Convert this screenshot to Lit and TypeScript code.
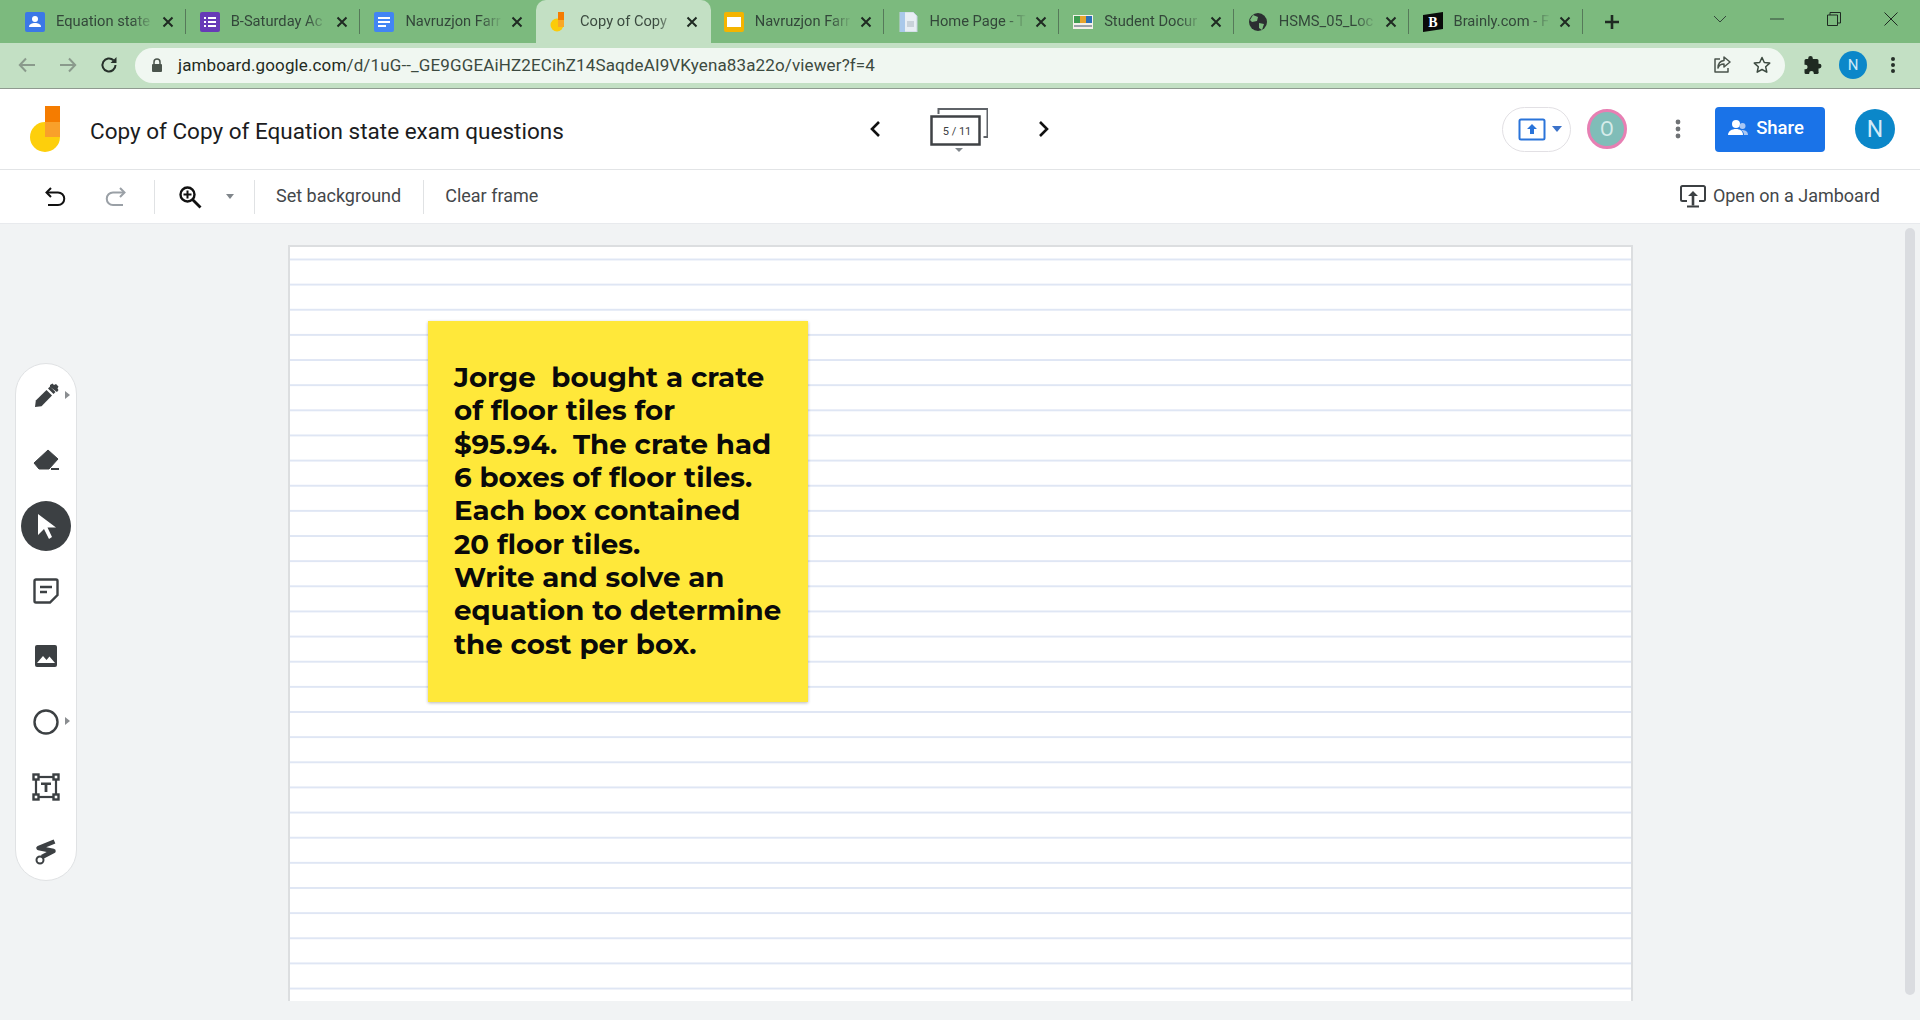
import { LitElement, html, css, svg } from "lit";
import { customElement } from "lit/decorators.js";

const favs: Record<string, unknown> = {
  classroom: svg`<rect x="1" y="0" width="20" height="20" rx="2" fill="#3b78e7"/><circle cx="11" cy="7" r="3" fill="#fff"/><path d="M5 15c0-3 3-4 6-4s6 1 6 4z" fill="#fff"/>`,
  forms: svg`<rect x="1" y="0" width="20" height="20" rx="2" fill="#673ab7"/><g fill="#fff"><rect x="5" y="5" width="2" height="2"/><rect x="9" y="5" width="8" height="2"/><rect x="5" y="9" width="2" height="2"/><rect x="9" y="9" width="8" height="2"/><rect x="5" y="13" width="2" height="2"/><rect x="9" y="13" width="8" height="2"/></g>`,
  docs: svg`<rect x="1" y="0" width="20" height="20" rx="2" fill="#4285f4"/><g fill="#fff"><rect x="5" y="5" width="12" height="2"/><rect x="5" y="9" width="12" height="2"/><rect x="5" y="13" width="8" height="2"/></g>`,
  jam: svg`<circle cx="9" cy="13" r="6.5" fill="#fbcb0a"/><rect x="10" y="0" width="6" height="8" fill="#f57c00"/><rect x="10" y="8" width="6" height="7" fill="#f9a825"/>`,
  slides: svg`<rect x="1" y="0" width="20" height="20" rx="2" fill="#f4b400"/><rect x="4" y="5" width="14" height="10" fill="#fff"/>`,
  page: svg`<path d="M3 0h13l4 4v16H3z" fill="#e8eef4" stroke="#c5d3e0"/><rect x="3" y="0" width="5" height="20" fill="#a9c8ea"/><rect x="10" y="9" width="7" height="6" fill="#c9d2da"/>`,
  nyc: svg`<rect x="1" y="3" width="20" height="14" fill="#f3f1ea"/><rect x="2" y="4" width="6" height="7" fill="#3f9c50"/><rect x="8" y="4" width="6" height="7" fill="#e6a52c"/><rect x="14" y="4" width="6" height="7" fill="#2c6fb7"/><rect x="2" y="13" width="18" height="2" fill="#9aa3a8"/>`,
  globe: svg`<circle cx="11" cy="10" r="9" fill="#2b2f31"/><path d="M6 3l5 2-1 4-5 1-2-2zM12 11l5 1-2 6-3-2z" fill="#7cba7e"/>`,
  brainly: svg`<path d="M1 3l20-3v17L1 20z" fill="#0a0a0a"/><text x="11" y="15" text-anchor="middle" font-family="Liberation Serif" font-weight="700" font-size="14" fill="#fff">B</text>`,
};

const tabs = [
  ["classroom", "Equation state"],
  ["forms", "B-Saturday Ac"],
  ["docs", "Navruzjon Farr"],
  ["jam", "Copy of Copy"],
  ["slides", "Navruzjon Farr"],
  ["page", "Home Page - T"],
  ["nyc", "Student Docur"],
  ["globe", "HSMS_05_Loc"],
  ["brainly", "Brainly.com - F"],
];

@customElement("app-root")
export class AppRoot extends LitElement {
  static styles = css`
    :host { display: block; width: 1920px; height: 1020px; overflow: hidden; font-family: Roboto, "Liberation Sans", sans-serif; background: #f1f3f4; }
    svg { display: block; flex: none; }
    .tabstrip { height: 43px; background: #7cba7e; display: flex; padding-left: 12px; box-sizing: border-box; align-items: stretch; }
    .tab { width: 174.700px; box-sizing: border-box; display: flex; align-items: center; padding: 0 11px 0 12px; border-right: 1px solid transparent; position: relative; font-size: 14.700px; color: #33473a; }
    .tab .sep { width: 1px; height: 25px; background: #56795a; margin-left: 11px; margin-right: -11px; }
    .tab.active { background: #c3e0c4; border-radius: 10px 10px 0 0; color: #3b4a3f; }
    .tab.noline .sep { background: transparent; }
    .tab .title { flex: 1; margin-left: 10px; padding-bottom: 1px; white-space: nowrap; -webkit-mask-image: linear-gradient(90deg, #000 76%, rgba(0,0,0,.1) 96%); mask-image: linear-gradient(90deg, #000 76%, rgba(0,0,0,.1) 96%); }
    .tab .x { margin-left: 6px; }
    .plus { margin-left: 19px; align-self: center; }
    .winctl { margin-left: auto; display: flex; align-items: center; align-self: flex-start; height: 38px; padding-right: 22px; gap: 43px; }
    .addr { background: #c3e0c4; display: flex; align-items: center; padding-left: 18px; box-sizing: border-box; border-bottom: 1px solid #8f9a90; height: 46px; padding-bottom: 1px; }
    .addr .nav { display: flex; gap: 23px; align-items: center; }
    .omni { margin-left: 17px; width: 1650px; height: 35px; background: #f0f7f1; border-radius: 18px; display: flex; align-items: center; box-sizing: border-box; padding: 0 14px 0 16px; font-size: 17px; color: #3c4a40; }
    .omni .url { margin-left: 15px; flex: 1; white-space: nowrap; letter-spacing: .13px; font-variant-ligatures: none; font-feature-settings: "liga" 0, "calt" 0; }
    .omni .url b { font-weight: 400; color: #1f2a22; }
    .omni .acts { display: flex; gap: 22px; align-items: center; }
    .addr .ext { margin-left: 18px; display: flex; align-items: center; gap: 16px; }
    .av-s { width: 28px; height: 28px; border-radius: 50%; background: #0b87c9; color: #cfe9f7; font-size: 15px; display: flex; align-items: center; justify-content: center; }
    .menu-dots { margin-left: 7px; }

    .head { height: 81px; background: #fff; border-bottom: 1px solid #e2e4e6; box-sizing: border-box; display: flex; align-items: center; padding-left: 30px; }
    .doc-title { margin-left: 30px; width: 779px; padding-top: 3px; font-size: 22.500px; color: #1b1c1e; white-space: nowrap; }
    .head .pager { display: flex; align-items: center; }
    .frames { margin: 0 50px 0 49px; position: relative; width: 58px; height: 46px; }
    .frames .count { position: absolute; left: 2px; top: 12px; width: 50px; height: 27px; text-align: center; font-size: 11px; line-height: 28px; color: #3c4043; }
    .head-right { margin-left: auto; display: flex; align-items: center; padding-right: 25px; }
    .pill { width: 69px; height: 45px; border: 1px solid #e2e0e4; border-radius: 23px; box-sizing: border-box; display: flex; align-items: center; padding-left: 15px; gap: 6px; }
    .o-av { margin-left: 16px; width: 40px; height: 40px; border-radius: 50%; background: #80bdb8; border: 3px solid #e77fb3; box-sizing: border-box; color: #d6ecea; font-size: 20px; display: flex; align-items: center; justify-content: center; }
    .dots { margin-left: 48px; margin-right: 34px; }
    .share { width: 110px; height: 45px; background: #1a73e8; border-radius: 4px; color: #fff; font-size: 18.500px; font-weight: 500; display: flex; align-items: center; justify-content: center; gap: 8px; padding: 0 9px 3px 0; box-sizing: border-box; }
    .n-av { margin-left: 30px; width: 40px; height: 40px; border-radius: 50%; background: #0b87c9; color: #d3ebf8; font-size: 23px; display: flex; align-items: center; justify-content: center; }

    .bar { height: 54px; background: #fff; border-bottom: 1px solid #e8eaed; box-sizing: border-box; display: flex; align-items: center; color: #44474a; font-size: 18px; padding-left: 44px; }
    .bar .s { width: 1px; height: 34px; background: #e0e2e4; }
    .bar .lbl { padding-bottom: 3px; }
    .bar .right { margin-left: auto; display: flex; align-items: center; gap: 7px; padding-right: 40px; }
    .m-redo { margin-left: 35px; }
    .m-sep1 { margin-left: 27px; }
    .m-zoom { margin-left: 23px; }
    .m-caret { margin-left: 24px; }
    .m-sep2 { margin-left: 20px; }
    .m-lbl { margin-left: 21px; }
    .m-sep3 { margin-left: 22px; }

    .stage { position: relative; height: 796px; padding: 21px 0 0 288px; box-sizing: border-box; }
    .frame { width: 1345px; height: 756px; box-sizing: border-box; border: 2px solid #dcdee0; border-bottom: 0; position: relative;
      background-color: #fff;
      background-image: linear-gradient(#dfe6f4 0 2px, transparent 2px);
      background-size: 100% 25.150px; background-position: 0 11.500px; }
    .sticky { position: absolute; left: 138px; top: 74px; width: 380px; height: 381px; background: #ffe83a; box-shadow: 0 1px 3px rgba(0,0,0,.28); box-sizing: border-box; padding: 40px 10px 0 26px; font-family: Montserrat, Inter, sans-serif; font-weight: 700; font-size: 27.700px; line-height: 33.350px; color: #0a0a0a; white-space: pre; }
    .palette { position: absolute; left: 15px; top: 139px; width: 62px; height: 518px; background: #fff; border-radius: 31px; box-sizing: border-box; border: 1px solid #e0e2e4; display: flex; flex-direction: column; align-items: center; }
    .tool { width: 50px; height: 65.300px; display: flex; align-items: center; justify-content: center; position: relative; flex: none; }
    .tool:first-child { margin-top: -1.500px; }
    .tool .more { position: absolute; left: 44px; top: 28px; width: 0; height: 0; border-left: 5px solid #8a8d90; border-top: 4px solid transparent; border-bottom: 4px solid transparent; }
    .tool.on::before { content: ""; position: absolute; width: 50px; height: 50px; border-radius: 50%; background: #3c4043; }
    .tool svg { position: relative; }
    .scroll { position: absolute; right: 5px; top: 4px; width: 10px; height: 767px; border-radius: 5px; background: #dadce0; }
  `;

  fav(k: string) {
    return html`<svg width="22" height="20" viewBox="0 0 22 20">${favs[k]}</svg>`;
  }

  render() {
    const d = "#3c4043";
    const x = html`<svg class="x" width="12" height="12" viewBox="0 0 12 12"><path d="M1.500 1.500l9 9m0-9l-9 9" stroke="#1f2a22" stroke-width="2"/></svg>`;
    return html`
      <div class="tabstrip">
        ${tabs.map(([k, t], i) => html`<div class="tab ${i === 3 ? "active" : ""} ${i === 2 || i === 3 ? "noline" : ""}">
          ${this.fav(k)}<span class="title">${t}</span>${x}<span class="sep"></span>
        </div>`)}
        <svg class="plus" width="18" height="18" viewBox="0 0 18 18"><path d="M9 2v14M2 9h14" stroke="#1f2a22" stroke-width="2.600"/></svg>
        <div class="winctl">
          <svg width="14" height="8" viewBox="0 0 14 8"><path d="M1 1l6 6 6-6" fill="none" stroke="#33473a" stroke-width="1"/></svg>
          <svg width="14" height="2" viewBox="0 0 14 2"><path d="M0 1h14" stroke="#33473a" stroke-width="1"/></svg>
          <svg width="14" height="14" viewBox="0 0 14 14"><path d="M.5 3h10v10.500H.5zM3 3V.5h10.500V11H10.500" fill="none" stroke="#1f2a22" stroke-width="1"/></svg>
          <svg width="14" height="14" viewBox="0 0 14 14"><path d="M.5.500l13 13m0-13l-13 13" stroke="#1f2a22" stroke-width="1"/></svg>
        </div>
      </div>
      <div class="addr">
        <div class="nav">
          <svg width="18" height="16" viewBox="0 0 18 16"><path d="M17 8H2m6-6.500L1.800 8 8 14.500" fill="none" stroke="#8a9a8c" stroke-width="2"/></svg>
          <svg width="18" height="16" viewBox="0 0 18 16"><path d="M1 8h15M10 1.500L16.200 8 10 14.500" fill="none" stroke="#8a9a8c" stroke-width="2"/></svg>
          <svg width="18" height="18" viewBox="0 0 18 18"><path d="M15.500 9a6.500 6.500 0 1 1-2-4.700" fill="none" stroke="#26302a" stroke-width="2"/><path d="M16.500 1v6h-6z" fill="#26302a"/></svg>
        </div>
        <div class="omni">
          <svg width="12" height="15" viewBox="0 0 12 15"><rect x="1" y="6" width="10" height="8" rx="1" fill="#4a544c"/><path d="M3 6V4a3 3 0 0 1 6 0v2" fill="none" stroke="#4a544c" stroke-width="1.500"/></svg>
          <span class="url"><b>jamboard.google.com</b>/d/1uG--_GE9GGEAiHZ2ECihZ14SaqdeAI9VKyena83a22o/viewer?f=4</span>
          <div class="acts">
            <svg width="18" height="18" viewBox="0 0 18 18"><path d="M7 3H2v13h13v-4" fill="none" stroke="#4a544c" stroke-width="1.500" stroke-linejoin="round"/><path d="M11 1l6 5-6 5V8c-3 0-5 1-6 4 0-4 2-7 6-7.500z" fill="none" stroke="#4a544c" stroke-width="1.500" stroke-linejoin="round"/></svg>
            <svg width="18" height="18" viewBox="0 0 18 18"><path d="M9 1.500l2.300 5 5.400.6-4 3.700 1.100 5.400L9 13.500l-4.800 2.700 1.100-5.400-4-3.700 5.400-.6z" fill="none" stroke="#3c4a40" stroke-width="1.500" stroke-linejoin="round"/></svg>
          </div>
        </div>
        <div class="ext">
          <svg width="20" height="20" viewBox="0 0 20 20"><path d="M7.500 1a2.300 2.300 0 0 1 2.300 2.300V4H14a1.500 1.500 0 0 1 1.500 1.500v3.300h.7a2.300 2.300 0 0 1 0 4.600h-.7v3.300A1.500 1.500 0 0 1 14 19h-3.200v-.8a2.300 2.300 0 0 0-4.600 0v.8H3a1.500 1.500 0 0 1-1.500-1.500v-3.200h.8a2.300 2.300 0 0 0 0-4.600h-.8V5.500A1.500 1.500 0 0 1 3 4h2.200v-.7A2.300 2.300 0 0 1 7.500 1z" fill="#1f2a22"/></svg>
          <div class="av-s">N</div>
          <svg class="menu-dots" width="6" height="18" viewBox="0 0 6 18"><circle cx="3" cy="3" r="2" fill="#26302a"/><circle cx="3" cy="9" r="2" fill="#26302a"/><circle cx="3" cy="15" r="2" fill="#26302a"/></svg>
        </div>
      </div>

      <div class="head">
        <svg width="30" height="46" viewBox="0 0 30 46"><circle cx="15" cy="31" r="15" fill="#fdcf0c"/><rect x="15" y="0" width="15" height="16" fill="#f57c00"/><rect x="15" y="16" width="15" height="15" fill="#f9a02a"/></svg>
        <div class="doc-title">Copy of Copy of Equation state exam questions</div>
        <div class="pager">
          <svg width="12" height="18" viewBox="0 0 12 18"><path d="M10 2L3 9l7 7" fill="none" stroke="#111" stroke-width="2.600"/></svg>
          <div class="frames">
            <svg width="58" height="46" viewBox="0 -2 58 46"><path d="M8.500 6V1h49v28h-4" fill="none" stroke="#5f6368" stroke-width="2"/><rect x="1.500" y="8.500" width="48" height="28" fill="#fff" stroke="#3f4245" stroke-width="2.500"/><path d="M25 40h8l-4 4z" fill="#80868b"/></svg>
            <div class="count">5 / 11</div>
          </div>
          <svg width="12" height="18" viewBox="0 0 12 18"><path d="M2 2l7 7-7 7" fill="none" stroke="#111" stroke-width="2.600"/></svg>
        </div>
        <div class="head-right">
          <div class="pill">
            <svg width="28" height="23" viewBox="0 0 28 23"><rect x="1.500" y="1.500" width="25" height="20" rx="1.500" fill="none" stroke="#2a74da" stroke-width="2"/><path d="M14 6l5 5h-3v5h-4v-5H9z" fill="#2a74da"/></svg>
            <svg width="10" height="6" viewBox="0 0 10 6"><path d="M0 0h10L5 6z" fill="#3b72c9"/></svg>
          </div>
          <div class="o-av">O</div>
          <svg class="dots" width="6" height="20" viewBox="0 0 6 20"><circle cx="3" cy="3" r="2.400" fill="#6f7275"/><circle cx="3" cy="10" r="2.400" fill="#6f7275"/><circle cx="3" cy="17" r="2.400" fill="#6f7275"/></svg>
          <div class="share">
            <svg width="21" height="17" viewBox="0 0 21 17"><circle cx="9" cy="5" r="4" fill="#fff"/><path d="M1 16c0-4 4-6 8-6s7 2 7 6z" fill="#fff"/><circle cx="15.500" cy="7" r="3" fill="#a9c7f3"/><path d="M14 11c4 0 7 1 7 5h-4c0-2-1-4-3-5z" fill="#a9c7f3"/></svg>
            Share
          </div>
          <div class="n-av">N</div>
        </div>
      </div>

      <div class="bar">
        <svg width="24" height="24" viewBox="0 0 24 24"><path d="M7 3L2.500 7.500 7 12" fill="none" stroke="#111" stroke-width="2"/><path d="M3 7.500h11a6 6 0 0 1 0 12.500H4" fill="none" stroke="#111" stroke-width="2"/></svg>
        <svg class="m-redo" width="24" height="24" viewBox="0 0 24 24"><path d="M17 3l4.500 4.500L17 12" fill="none" stroke="#9aa0a6" stroke-width="2"/><path d="M21 7.500H10a6 6 0 0 0 0 12.500h10" fill="none" stroke="#9aa0a6" stroke-width="2"/></svg>
        <span class="s m-sep1"></span>
        <svg class="m-zoom" width="24" height="24" viewBox="0 0 24 24"><circle cx="9.500" cy="9.500" r="7" fill="none" stroke="#111" stroke-width="2.400"/><path d="M14.500 14.500l8 8" stroke="#111" stroke-width="2.800"/><path d="M9.500 5.500v8m-4-4h8" stroke="#111" stroke-width="2"/></svg>
        <svg class="m-caret" width="8" height="5" viewBox="0 0 8 5"><path d="M0 0h8L4 5z" fill="#80868b"/></svg>
        <span class="s m-sep2"></span>
        <span class="lbl m-lbl">Set background</span>
        <span class="s m-sep3"></span>
        <span class="lbl m-lbl">Clear frame</span>
        <div class="right">
          <svg width="26" height="23" viewBox="0 0 26 23"><path d="M7 16H2.500a1.500 1.500 0 0 1-1.500-1.500v-12A1.500 1.500 0 0 1 2.500 1h21A1.500 1.500 0 0 1 25 2.500v12a1.500 1.500 0 0 1-1.500 1.500H19" fill="none" stroke="#3c4043" stroke-width="2"/><path d="M13 6l5 5h-3.700v9.500h-2.600V11H8z" fill="#3c4043"/><path d="M7 21.500h12" stroke="#3c4043" stroke-width="2"/></svg>
          <span class="lbl">Open on a Jamboard</span>
        </div>
      </div>

      <div class="stage">
        <div class="frame">
          <div class="sticky">Jorge  bought a crate
of floor tiles for
$95.94.  The crate had
6 boxes of floor tiles.
Each box contained
20 floor tiles.
Write and solve an
equation to determine
the cost per box.</div>
        </div>
        <div class="palette">
          <div class="tool"><svg width="25" height="25" viewBox="0 0 25 25"><path d="M1 24l.8-6.500L12.500 7l5.500 5.500L7.500 23.200z" fill="${d}"/><path d="M14 5.500l2-2 5.500 5.500-2 2z" fill="${d}"/><path d="M16 2l2.500-1.500L20 2l2-1 2.500 2.500-1 2 1 1.500-1.500 2L16 4z" fill="${d}"/></svg><span class="more"></span></div>
          <div class="tool"><svg width="27" height="24" viewBox="0 0 27 24"><path d="M1 15L15 2l10 9-9 10H6z" fill="${d}" stroke="${d}" stroke-linejoin="round"/><path d="M18 21h8" stroke="${d}" stroke-width="2"/></svg></div>
          <div class="tool on"><svg width="24" height="28" viewBox="0 0 24 28"><path d="M4 2v21l6-6 5 10 3-2-4.500-9.500H22z" fill="#fff"/></svg></div>
          <div class="tool"><svg width="26" height="26" viewBox="0 0 26 26"><path d="M3 1.500h20a1.500 1.500 0 0 1 1.500 1.500v14L17 24.500H3A1.500 1.500 0 0 1 1.500 23V3A1.500 1.500 0 0 1 3 1.500z" fill="none" stroke="${d}" stroke-width="2.400"/><path d="M7 9h12M7 14h7" stroke="${d}" stroke-width="2.400"/></svg></div>
          <div class="tool"><svg width="24" height="24" viewBox="0 0 24 24"><rect x="1" y="1" width="22" height="22" rx="2" fill="${d}"/><path d="M3 19l6-7 3.500 4 3-3.500L21 19z" fill="#fff"/></svg></div>
          <div class="tool"><svg width="26" height="26" viewBox="0 0 26 26"><circle cx="13" cy="13" r="11.500" fill="none" stroke="${d}" stroke-width="2.400"/></svg><span class="more"></span></div>
          <div class="tool"><svg width="28" height="28" viewBox="0 0 28 28"><rect x="4" y="4" width="20" height="20" fill="none" stroke="${d}" stroke-width="2.200"/><g fill="#fff" stroke="${d}" stroke-width="2.400"><rect x="1.500" y="1.500" width="5" height="5"/><rect x="21.500" y="1.500" width="5" height="5"/><rect x="1.500" y="21.500" width="5" height="5"/><rect x="21.500" y="21.500" width="5" height="5"/></g><path d="M9 9.500h10V12h-3.600v7h-2.800v-7H9z" fill="${d}"/></svg></div>
          <div class="tool"><svg width="24" height="26" viewBox="0 0 24 26"><path d="M20.500 2.500L4.500 9l15 3L8 18" fill="none" stroke="${d}" stroke-width="4.500" stroke-linejoin="round"/><circle cx="6" cy="21" r="3.500" fill="#fff" stroke="${d}" stroke-width="2"/></svg></div>
        </div>
        <div class="scroll"></div>
      </div>
    `;
  }
}
